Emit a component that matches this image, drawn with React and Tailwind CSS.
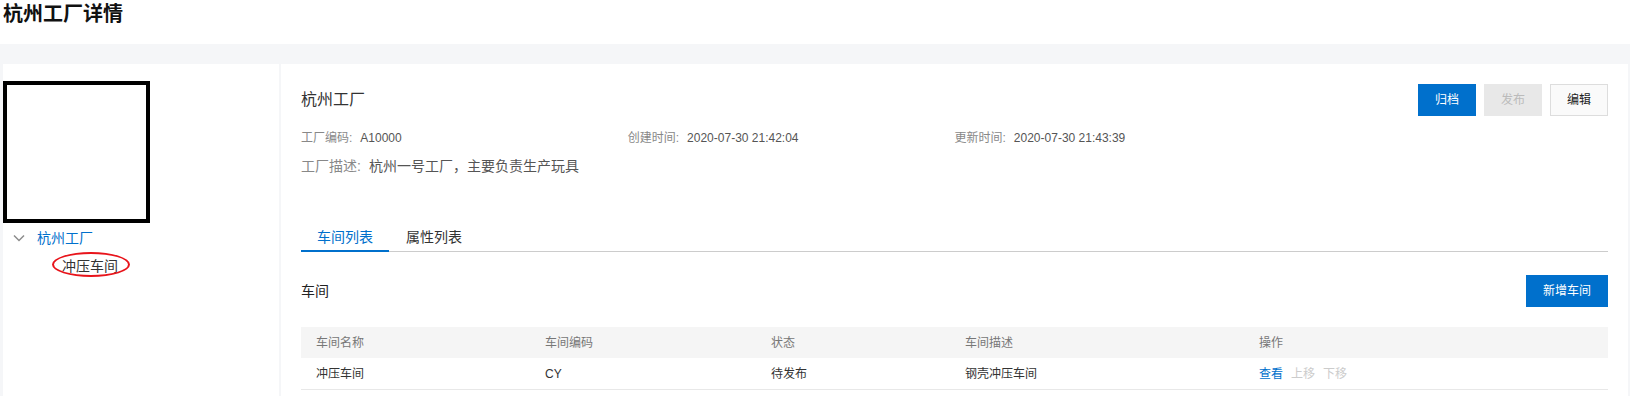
export default function App() {
  const cols = ["w-[229px]", "w-[226px]", "w-[194px]", "w-[294px]", "flex-1"];
  return (
    <div className="w-[1630px] h-[396px] bg-white font-['Liberation_Sans','Noto_Sans_CJK_SC',sans-serif] text-[#333] overflow-hidden flex flex-col">
      <div className="h-[44px] shrink-0 pl-[3px] pt-[2px]">
        <h1 className="text-[20px] leading-[24px] font-bold text-[#111]">杭州工厂详情</h1>
      </div>
      <div className="flex-1 bg-[#f5f6f8] pt-[20px] pl-[3px] pr-[2px] flex gap-[2px]">
        <aside className="w-[276px] bg-white shrink-0">
          <div className="mt-[17px] w-[147px] h-[142px] border-4 border-black"></div>
          <div className="flex items-center h-[28px] pl-[10px] mt-px">
            <svg width="12" height="8" viewBox="0 0 12 8" className="shrink-0">
              <polyline points="1,1.5 6,6.5 11,1.5" fill="none" stroke="#8c8c8c" strokeWidth="1.5" />
            </svg>
            <span className="ml-[12px] text-[14px] text-[#0070cc]">杭州工厂</span>
          </div>
          <div className="flex items-center h-[28px] pl-[59px]">
            <span className="relative text-[14px] text-[#333]">
              冲压车间
              <span className="absolute left-[-10px] top-[-4px] w-[78px] h-[25px] rounded-[50%] border-2 border-[#e8141b]"></span>
            </span>
          </div>
        </aside>
        <main className="flex-1 bg-white px-[20px] pt-[20px]">
          <div className="flex items-center justify-between h-[32px]">
            <h2 className="text-[16px] text-[#333]">杭州工厂</h2>
            <div className="flex gap-[8px] text-[12px]">
              <button className="w-[58px] h-[32px] bg-[#0070cc] text-white">归档</button>
              <button className="w-[58px] h-[32px] bg-[#e8e8e8] text-[#bbbbbb]">发布</button>
              <button className="w-[58px] h-[32px] bg-[#fafafa] border border-[#dddddd] text-[#222]">编辑</button>
            </div>
          </div>
          <div className="mt-[12px] grid grid-cols-4 text-[12px] leading-[20px]">
            <div><span className="text-[#888]">工厂编码:</span><span className="ml-[8px] text-[#555]">A10000</span></div>
            <div><span className="text-[#888]">创建时间:</span><span className="ml-[8px] text-[#555]">2020-07-30 21:42:04</span></div>
            <div><span className="text-[#888]">更新时间:</span><span className="ml-[8px] text-[#555]">2020-07-30 21:43:39</span></div>
          </div>
          <div className="mt-[8px] text-[14px] leading-[20px]">
            <span className="text-[#888]">工厂描述:</span><span className="ml-[8px] text-[#555]">杭州一号工厂，主要负责生产玩具</span>
          </div>
          <div className="mt-[51px] flex border-b border-[#cccccc] text-[14px] leading-[20px]">
            <div className="px-[16px] pb-[3px] border-b-2 border-[#0070cc] -mb-px text-[#0070cc]">车间列表</div>
            <div className="px-[17px] pb-[3px] border-b-2 border-transparent -mb-px text-[#333]">属性列表</div>
          </div>
          <div className="mt-[23px] flex items-center justify-between h-[32px]">
            <div className="text-[14px] text-[#222]">车间</div>
            <button className="w-[82px] h-[32px] bg-[#0070cc] text-white text-[12px]">新增车间</button>
          </div>
          <div className="mt-[20px] text-[12px]">
            <div className="flex h-[31px] items-center bg-[#f5f5f5] text-[#777]">
              {["车间名称", "车间编码", "状态", "车间描述", "操作"].map((h, i) => (
                <div key={h} className={`${cols[i]} pl-[15px]`}>{h}</div>
              ))}
            </div>
            <div className="flex h-[32px] items-center border-b border-[#e8e8e8] text-[#333]">
              <div className={`${cols[0]} pl-[15px]`}>冲压车间</div>
              <div className={`${cols[1]} pl-[15px]`}>CY</div>
              <div className={`${cols[2]} pl-[15px]`}>待发布</div>
              <div className={`${cols[3]} pl-[15px]`}>钢壳冲压车间</div>
              <div className={`${cols[4]} pl-[15px] flex gap-[8px]`}>
                <span className="text-[#0070cc]">查看</span>
                <span className="text-[#cccccc]">上移</span>
                <span className="text-[#cccccc]">下移</span>
              </div>
            </div>
          </div>
        </main>
      </div>
    </div>
  );
}
